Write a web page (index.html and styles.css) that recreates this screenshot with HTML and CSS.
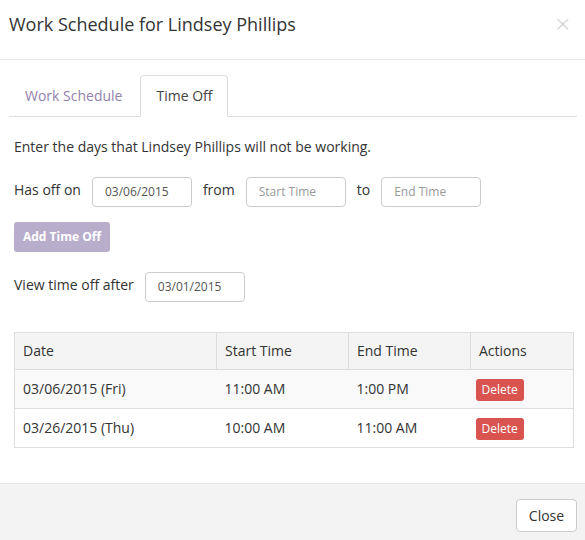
FILE: index.html
```html
<!DOCTYPE html>
<html>
<head>
<meta charset="utf-8">
<link rel="stylesheet" href="styles.css">
</head>
<body>
<div class="modal">
  <div class="modal-header">
    <h4 class="modal-title">Work Schedule for Lindsey Phillips</h4>
    <span class="close">×</span>
  </div>
  <div class="modal-body">
    <ul class="tabs">
      <li class="tab">Work Schedule</li>
      <li class="tab active">Time Off</li>
    </ul>
    <p class="intro">Enter the days that Lindsey Phillips will not be working.</p>
    <div class="form-row">
      <span class="label first">Has off on</span>
      <span class="input">03/06/2015</span>
      <span class="label">from</span>
      <span class="input placeholder">Start Time</span>
      <span class="label">to</span>
      <span class="input placeholder">End Time</span>
    </div>
    <div class="btn-row">
      <span class="btn-add">Add Time Off</span>
    </div>
    <div class="form-row view-row">
      <span class="label first">View time off after</span>
      <span class="input">03/01/2015</span>
    </div>
    <table class="table">
      <thead>
        <tr><th class="c1">Date</th><th class="c2">Start Time</th><th class="c3">End Time</th><th class="c4">Actions</th></tr>
      </thead>
      <tbody>
        <tr class="odd"><td>03/06/2015 (Fri)</td><td>11:00 AM</td><td>1:00 PM</td><td class="act"><span class="btn-del">Delete</span></td></tr>
        <tr><td>03/26/2015 (Thu)</td><td>10:00 AM</td><td>11:00 AM</td><td class="act"><span class="btn-del">Delete</span></td></tr>
      </tbody>
    </table>
  </div>
  <div class="modal-footer">
    <span class="btn-close">Close</span>
  </div>
</div>
</body>
</html>
```

FILE: styles.css
```css
html, body {
  margin: 0;
  padding: 0;
  background: #fff;
}
body {
  font-family: "Open Sans", "Liberation Sans", sans-serif;
  font-size: 14px;
  color: #333;
}
.modal {
  width: 585px;
  height: 540px;
  display: flex;
  flex-direction: column;
}
.modal-header {
  display: flex;
  justify-content: space-between;
  align-items: flex-start;
  padding: 11px 13px 22px 9px;
  border-bottom: 1px solid #e5e5e5;
}
.modal-title {
  margin: 0;
  font-size: 18px;
  font-weight: 400;
  line-height: 26px;
}
.close {
  font-size: 22px;
  line-height: 26px;
  color: #000;
  opacity: 0.2;
  font-family: "DejaVu Sans", sans-serif;
  font-weight: 300;
}
.modal-body {
  flex: 1;
  padding: 15px 11px 0 14px;
}
.tabs {
  list-style: none;
  margin: 0 -3px 0 -5px;
  padding: 0;
  display: flex;
  border-bottom: 1px solid #ddd;
}
.tab {
  padding: 10px 15px;
  line-height: 20px;
  margin-right: 2px;
  margin-bottom: -1px;
  border: 1px solid transparent;
  border-radius: 4px 4px 0 0;
  color: #9282ad;
}
.tab.active {
  color: #444;
  border-color: #ddd;
  border-bottom-color: #fff;
  background: #fff;
}
.intro {
  margin: 20px 0 0;
  line-height: 20px;
}
.form-row {
  display: flex;
  align-items: center;
  margin-top: 20px;
}
.label {
  margin: 0 11px;
  line-height: 20px;
  position: relative;
  top: -2px;
}
.label.first {
  margin-left: 0;
}
.input {
  box-sizing: border-box;
  width: 100px;
  height: 30px;
  border: 1px solid #ccc;
  border-radius: 4px;
  font-size: 12px;
  line-height: 28px;
  padding: 0 12px;
  color: #555;
}
.input.placeholder {
  color: #999;
}
.btn-row {
  display: flex;
  margin-top: 15px;
}
.btn-add {
  box-sizing: border-box;
  height: 30px;
  width: 96px;
  background: #b8aecc;
  color: #fff;
  font-weight: 700;
  font-size: 12px;
  line-height: 30px;
  text-align: center;
  border-radius: 3px;
}
.view-row {
  margin-top: 20px;
}
.table {
  margin-top: 30px;
  width: 560px;
  border-collapse: collapse;
  border: 1px solid #ddd;
}
.table th, .table td {
  text-align: left;
  font-weight: 400;
  padding: 0 8px;
  border-top: 1px solid #ddd;
}
.table th {
  background: #f4f4f4;
  border-left: 1px solid #ddd;
  height: 36px;
  line-height: 20px;
}
.table td {
  height: 38px;
  line-height: 22px;
}
.table td.act {
  padding-left: 5px;
}
.table tr.odd td {
  background: #f9f9f9;
}
.c1 { width: 185px; }
.c2 { width: 115px; }
.c3 { width: 105px; }
.btn-del {
  display: inline-block;
  vertical-align: middle;
  background: #d9534f;
  color: #fff;
  font-size: 12px;
  line-height: 18px;
  padding: 2px 6px;
  border-radius: 3px;
}
.modal-footer {
  height: 57px;
  box-sizing: border-box;
  border-top: 1px solid #e5e5e5;
  background: #f3f3f3;
  display: flex;
  justify-content: flex-end;
  align-items: flex-start;
  padding: 15px 8px 0 0;
}
.btn-close {
  box-sizing: border-box;
  height: 33px;
  width: 61px;
  line-height: 31px;
  text-align: center;
  border: 1px solid #ccc;
  border-radius: 4px;
  background: #fff;
  color: #333;
}
```
